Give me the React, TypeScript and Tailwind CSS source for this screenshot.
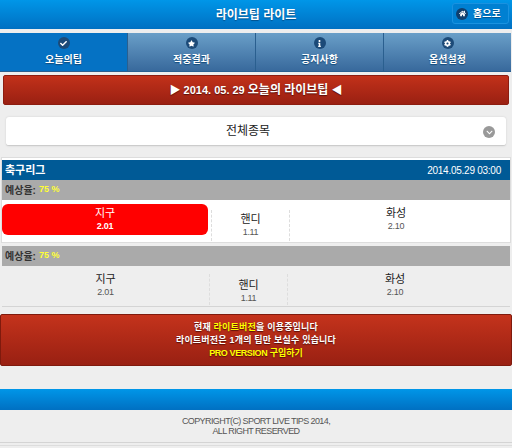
import React from "react";
import { FaCheck, FaStar, FaInfo, FaCog, FaHome, FaChevronDown } from "react-icons/fa";

const font = { fontFamily: '"Liberation Sans", "Noto Sans CJK KR", sans-serif' };

function Tab({ icon, label, active, last }: { icon: React.ReactNode; label: string; active?: boolean; last?: boolean }) {
  return (
    <div
      className={`flex-1 h-full flex flex-col items-center border-b border-[#2a5f8f] ${last ? "" : "border-r"} ${
        active ? "bg-[#0572c4]" : "bg-gradient-to-b from-[#6a9fc8] to-[#38699c]"
      }`}
    >
      <div className="mt-[4px] w-[12px] h-[12px] rounded-full bg-[#1c4a78] flex items-center justify-center text-white text-[7px]">
        {icon}
      </div>
      <div className="mt-[5px] text-[10px] leading-[12px] font-bold text-white [text-shadow:0_1px_1px_#124a7a]">{label}</div>
    </div>
  );
}

function Odds({ name, val, red, cls }: { name: string; val: string; red?: boolean; cls: string }) {
  return (
    <div className={`${cls} shrink-0 h-[31px] flex flex-col items-center justify-center ${red ? "bg-[#ff0000] rounded-[6px]" : ""}`}>
      <div className={`text-[11px] leading-[13px] ${red ? "text-white" : "text-[#222]"}`}>{name}</div>
      <div className={`text-[9px] tracking-[-0.3px] leading-[11px] mt-px ${red ? "text-white font-bold" : "text-[#555]"}`}>{val}</div>
    </div>
  );
}

function Rate() {
  return (
    <div className="h-[20px] bg-[#aaaaaa] flex items-center pl-[3px] text-[10px] font-bold text-[#333]">
      예상율: <span className="text-[#ffff33] text-[9px] ml-[3px]">75 %</span>
    </div>
  );
}

function Sep({ cls }: { cls: string }) {
  return <div className={`w-0 h-[31px] border-l border-dashed border-[#dddddd] shrink-0 ${cls}`} />;
}

export default function App() {
  return (
    <div className="w-[512px] h-[448px] overflow-hidden bg-[#eeeeee] flex flex-col" style={font}>
      <div className="relative h-[29px] shrink-0 bg-gradient-to-b from-[#0096e8] to-[#0070c2] flex items-center justify-center text-white font-bold text-[12px] [text-shadow:0_1px_1px_#004f8a]">
        라이브팁 라이트
        <div className="absolute right-[3px] top-[3px] w-[57px] h-[21px] rounded-[3px] border border-[#1a92e0] bg-[#0080d2] flex items-center pl-[3px]">
          <span className="w-[12px] h-[12px] rounded-full bg-[#103f6e] flex items-center justify-center text-[7px]">
            <FaHome />
          </span>
          <span className="ml-[5px] text-[10px] font-bold text-white">홈으로</span>
        </div>
      </div>

      <div className="h-[39px] mt-[4px] shrink-0 flex pr-[1px]">
        <Tab icon={<FaCheck />} label="오늘의팁" active />
        <Tab icon={<FaStar />} label="적중결과" />
        <Tab icon={<FaInfo />} label="공지사항" />
        <Tab icon={<FaCog />} label="옵션설정" last />
      </div>

      <div className="mx-[3px] mt-[3px] h-[30px] shrink-0 rounded-[2px] border border-[#8c1d10] bg-gradient-to-b from-[#c2311a] to-[#9a2012] flex items-center justify-center text-white font-bold text-[11px] [text-shadow:0_1px_1px_#5a0f08]">
        <span>▶ 2014. 05. 29 <span className="text-[12px]">오늘의 라이브팁</span> ◀</span>
      </div>

      <div className="mx-[6px] mt-[12px] h-[29px] shrink-0 rounded-[3px] bg-white border-b border-[#cccccc] shadow-[0_0_2px_#cccccc] relative flex items-center justify-center pr-[16px] text-[12px] text-[#222]">
        전체종목
        <span className="absolute right-[11px] top-[9px] w-[12px] h-[12px] rounded-full bg-[#999999] flex items-center justify-center text-white text-[7px]">
          <FaChevronDown />
        </span>
      </div>

      <div className="mt-[12px] mx-[2px] shrink-0 bg-white outline outline-[1px] outline-[#dddddd] pt-[2px]">
        <div className="h-[20px] bg-[#005a96] flex items-center justify-between pl-[3px] pr-[9px] text-white">
          <span className="font-bold text-[11px]">축구리그</span>
          <span className="text-[10px] tracking-[-0.25px]">2014.05.29 03:00</span>
        </div>
        <Rate />
        <div className="h-[42px] flex items-start">
          <Odds name="지구" val="2.01" red cls="w-[206px] mt-[4px]" />
          <Sep cls="ml-[3px] mt-[10px]" />
          <Odds name="핸디" val="1.11" cls="w-[77px] mt-[10px]" />
          <Sep cls="mt-[10px]" />
          <Odds name="화성" val="2.10" cls="w-[212px] mt-[4px]" />
        </div>
      </div>

      <div className="mt-[2px] mx-[2px] shrink-0 border-b border-[#d4d4d4] bg-[#eeeeee] pt-[2px]">
        <Rate />
        <div className="h-[40px] flex items-start">
          <Odds name="지구" val="2.01" cls="w-[207px] mt-[4px]" />
          <Sep cls="mt-[8px]" />
          <Odds name="핸디" val="1.11" cls="w-[77px] mt-[10px]" />
          <Sep cls="mt-[8px]" />
          <Odds name="화성" val="2.10" cls="w-[214px] mt-[4px]" />
        </div>
      </div>

      <div className="mt-[7px] h-[52px] shrink-0 border border-[#7f1a0d] rounded-[2px] bg-gradient-to-b from-[#c4331c] to-[#992012] flex flex-col items-center justify-center text-[9px] font-bold leading-[13px] text-white tracking-[0.2px] [text-shadow:0_1px_1px_#5a0f08]">
        <div>현재 <span className="text-[#ffff00]">라이트버전</span>을 이용중입니다</div>
        <div>라이트버전은 1개의 팁만 보실수 있습니다</div>
        <div className="text-[#ffff00] tracking-normal"><span className="tracking-[-0.4px]">PRO VERSION</span> 구입하기</div>
      </div>

      <div className="mt-[23px] h-[21px] shrink-0 bg-gradient-to-b from-[#0096e8] to-[#0070c2]" />
      <div className="h-[33px] shrink-0 border-b border-[#d4d4d4] flex flex-col pt-[6px] items-center text-[9px] tracking-[-0.6px] leading-[10px] text-[#555555]">
        <div>COPYRIGHT(C) SPORT LIVE TIPS 2014,</div>
        <div>ALL RIGHT RESERVED</div>
      </div>
      <div className="mt-[2px] border-t border-[#dddddd]" />
    </div>
  );
}
